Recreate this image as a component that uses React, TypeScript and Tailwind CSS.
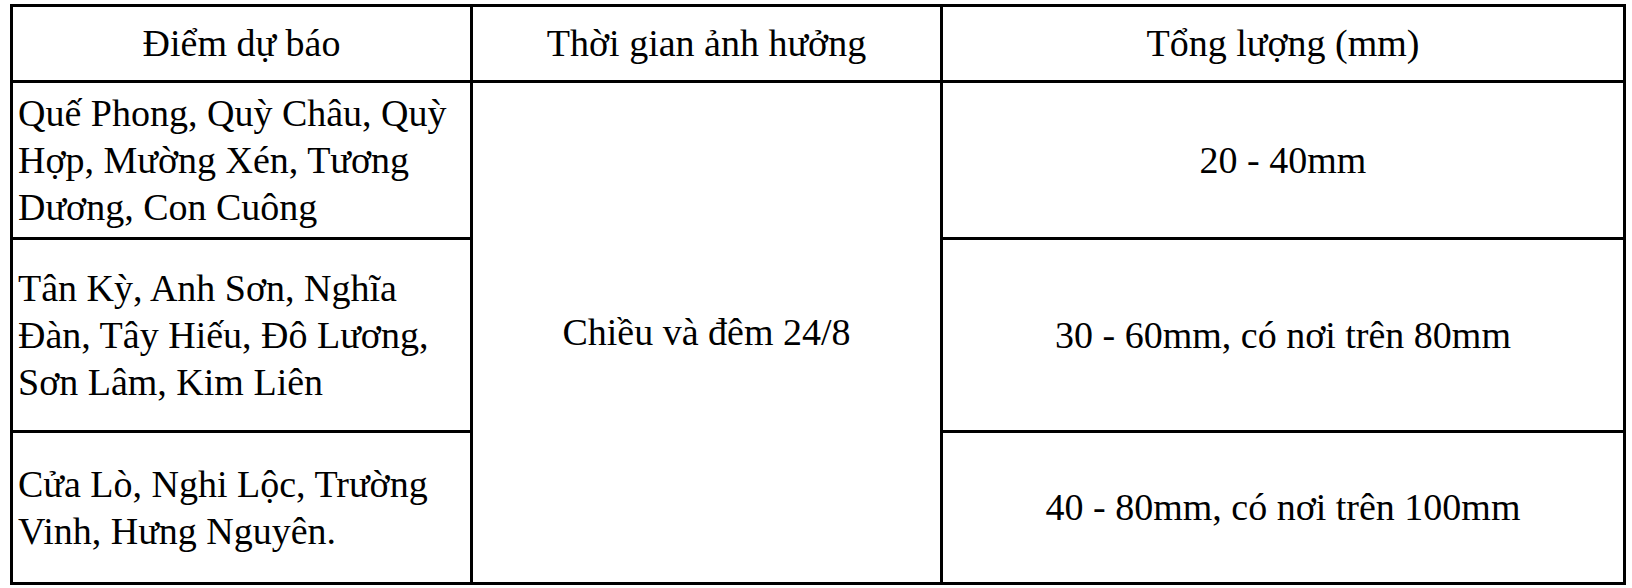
import { Fragment } from 'react';

const rows = [
  {
    place: 'Quế Phong, Quỳ Châu, Quỳ Hợp, Mường Xén, Tương Dương, Con Cuông',
    amount: '20 - 40mm',
  },
  {
    place: 'Tân Kỳ, Anh Sơn, Nghĩa Đàn, Tây Hiếu, Đô Lương, Sơn Lâm, Kim Liên',
    amount: '30 - 60mm, có nơi trên 80mm',
  },
  {
    place: 'Cửa Lò, Nghi Lộc, Trường Vinh, Hưng Nguyên.',
    amount: '40 - 80mm, có nơi trên 100mm',
  },
];

export default function App() {
  return (
    <div className="font-['Liberation_Serif',serif]">
      <div className="w-[1632px] h-[588px] bg-white pl-[10px] pt-[4px] text-black text-[38px] leading-[47px]">
        <div className="grid w-[1616px] grid-cols-[457px_467px_680px] grid-rows-[73px_154px_190px_149px] gap-[3px] bg-black p-[3px]">
          {/* tiêu đề */}
          <div className="flex items-center justify-center bg-white">Điểm dự báo</div>
          <div className="flex items-center justify-center bg-white">Thời gian ảnh hưởng</div>
          <div className="flex items-center justify-center bg-white">Tổng lượng (mm)</div>

          {rows.map((row, i) => (
            <Fragment key={i}>
              <div
                className="flex items-center bg-white pl-[5px] pr-[4px]"
                style={{ gridRow: i + 2, gridColumn: 1 }}
              >
                <p>{row.place}</p>
              </div>
              {i === 0 && (
                <div
                  className="flex items-center justify-center bg-white"
                  style={{ gridRow: '2 / span 3', gridColumn: 2 }}
                >
                  Chiều và đêm 24/8
                </div>
              )}
              <div
                className="flex items-center justify-center bg-white"
                style={{ gridRow: i + 2, gridColumn: 3 }}
              >
                {row.amount}
              </div>
            </Fragment>
          ))}
        </div>
      </div>
    </div>
  );
}
